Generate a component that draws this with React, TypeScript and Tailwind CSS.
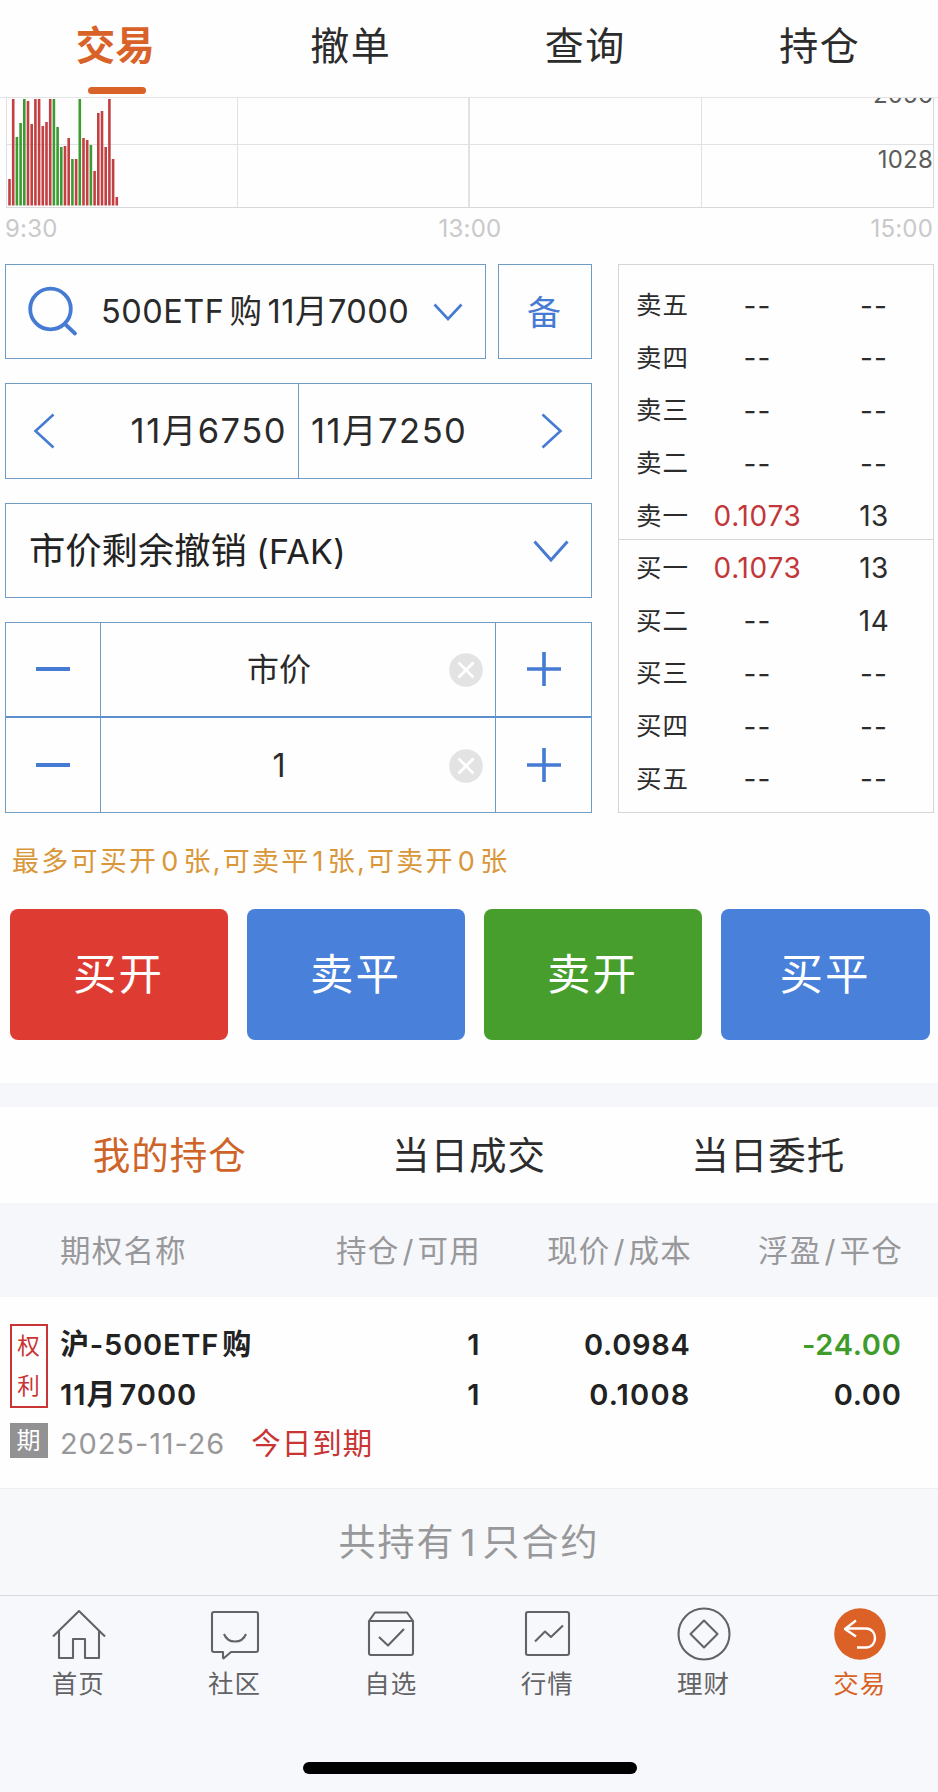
import React from "react";

const BAR_TOPS = [
  89, 9, 47, 33, 9, 11, 34, 9, 9, 36, 32, 9, 9, 37, 57, 56, 48, 69, 69, 9, 48, 50, 55, 81, 23, 21, 57, 9, 69, 107,
];
const BAR_COLORS = "rrgggrrrrrrrgggrrgrgrrgrrrrrrr";

function Tab({ label, active = false }: { label: string; active?: boolean }) {
  return (
    <div className="flex flex-1 flex-col items-center">
      <div
        className={
          active
            ? "mt-[16px] mr-[4px] h-[60px] text-[39.5px] leading-[60px] font-bold text-[#d96228]"
            : "mt-[16px] mr-[2px] h-[60px] text-[39px] leading-[60px] tracking-[1.5px] text-[#2c2c2c]"
        }
      >
        {label}
      </div>
      {active && <div className="mt-[11px] h-[7px] w-[58px] rounded-full bg-[#d96228]" />}
    </div>
  );
}

function VolumeChart() {
  return (
    <div className="relative h-[111px] overflow-hidden">
      <svg width="938" height="111" className="block" shapeRendering="crispEdges">
        <g stroke="#e2e2e4" strokeWidth="1">
          <path d="M6.5 0V109M237.5 0V109M701.5 0V109M6 46.5H933" />
          <path d="M469 0V109" strokeWidth="2" />
          <path d="M6 109.5H934M933.5 0V109" stroke="#d9d9dc" />
        </g>
        <g shapeRendering="auto">
          {BAR_TOPS.map((t, i) => (
            <rect
              key={i}
              x={8.2 + i * 3.7}
              y={t - 8}
              width={2.6}
              height={115.5 - t}
              fill={BAR_COLORS[i] === "g" ? "#3d9a30" : "#c23f42"}
            />
          ))}
        </g>
      </svg>
      <div className="absolute top-[-15px] right-[5px] text-[24px] leading-[24px] tracking-[0.2px] text-[#5c5c5c]">2056</div>
      <div className="absolute top-[50px] right-[5px] text-[24px] leading-[24px] tracking-[0.2px] text-[#5c5c5c]">1028</div>
    </div>
  );
}

function Chevron({ d, w, h, sw = 2.6 }: { d: string; w: number; h: number; sw?: number }) {
  return (
    <svg width={w} height={h} viewBox={`0 0 ${w} ${h}`} fill="none" stroke="#467bd3" strokeWidth={sw} className="block shrink-0">
      <path d={d} />
    </svg>
  );
}

function Stepper({ value, last = false }: { value: string; last?: boolean }) {
  return (
    <div className={last ? "flex h-[95px]" : "flex h-[95px] border-b-2 border-[#5d8fce]"}>
      <div className="flex w-[95px] items-center border-r border-[#6f9cc4] pl-[30px]">
        <div className="h-[4px] w-[34px] bg-[#467bd3]" />
      </div>
      <div className="flex w-[395px] items-center border-r border-[#6f9cc4]">
        <div className="ml-[40px] w-[276px] pt-[2px] text-center text-[32px] text-[#2a2a2a]">{value}</div>
        <svg width="34" height="34" viewBox="0 0 34 34" className="mt-[2px] ml-[32px] block">
          <circle cx="17" cy="17" r="16.8" fill="#e3e3e3" />
          <path d="M9.5 9.5L24.5 24.5M24.5 9.5L9.5 24.5" stroke="#fff" strokeWidth="2.8" />
        </svg>
      </div>
      <div className="flex flex-1 items-center justify-center">
        <svg width="34" height="34" viewBox="0 0 34 34" stroke="#467bd3" strokeWidth="3.6" className="block">
          <path d="M0 17H34M17 0V34" />
        </svg>
      </div>
    </div>
  );
}

function OrderForm() {
  return (
    <div className="flex w-[587px] flex-col">
      <div className="flex h-[95px] gap-[12px]">
        <div className="flex w-[481px] items-center border border-[#6f9cc4]">
          <svg width="52" height="52" viewBox="0 0 52 52" fill="none" stroke="#467bd3" strokeWidth="3.8" strokeLinecap="round" className="ml-[21px] block shrink-0">
            <circle cx="23.5" cy="23" r="20.3" />
            <path d="M38 38L48 47.5" />
          </svg>
          <div className="ml-[22px] w-[332px] pt-[1px] text-[32.5px] tracking-[0.5px] whitespace-nowrap text-[#2a2a2a]">
            500ETF<span className="mx-[5px]">购</span>11月7000
          </div>
          <Chevron d="M1.5 1.5L15 16L28.5 1.5" w={30} h={18} />
        </div>
        <div className="flex flex-1 items-center justify-center border border-[#6f9cc4] pt-[2px] pr-[2px] text-[34px] text-[#467bd3]">备</div>
      </div>
      <div className="mt-[24px] flex h-[96px] border border-[#6f9cc4]">
        <div className="flex w-[293px] items-center justify-between border-r border-[#6f9cc4] pr-[11px] pl-[27px]">
          <Chevron d="M20.5 1.5L2.5 18L20.5 34.5" w={22} h={36} />
          <div className="text-[34.5px] tracking-[1.5px] text-[#2a2a2a]">11月6750</div>
        </div>
        <div className="flex flex-1 items-center justify-between pr-[28px] pl-[12px]">
          <div className="text-[34.5px] tracking-[1.5px] text-[#2a2a2a]">11月7250</div>
          <Chevron d="M1.5 1.5L19.5 18L1.5 34.5" w={22} h={36} />
        </div>
      </div>
      <div className="mt-[24px] flex h-[95px] items-center justify-between border border-[#6f9cc4] pr-[22px] pl-[23px]">
        <div className="pt-[2px] text-[34px] text-[#222] whitespace-nowrap">
          <span className="text-[36.3px]">市价剩余撤销</span> <span className="text-[34px] tracking-[0.3px]">(FAK)</span>
        </div>
        <Chevron d="M1.5 1.5L18 20L34.5 1.5" w={36} h={22} sw={3} />
      </div>
      <div className="mt-[24px] flex h-[191px] flex-col border border-[#6f9cc4]">
        <Stepper value="市价" />
        <Stepper value="1" last />
      </div>
    </div>
  );
}

const BOOK = [
  ["卖五", "--", "--"],
  ["卖四", "--", "--"],
  ["卖三", "--", "--"],
  ["卖二", "--", "--"],
  ["卖一", "0.1073", "13"],
  ["买一", "0.1073", "13"],
  ["买二", "--", "14"],
  ["买三", "--", "--"],
  ["买四", "--", "--"],
  ["买五", "--", "--"],
];

function BookRow({ row }: { row: string[] }) {
  return (
    <div className="flex h-[52.6px] items-center text-[28px] leading-[40px] text-[#2c2c2c]">
      <div className="w-[70px] pl-[17px] text-[25.5px] tracking-[1px] whitespace-nowrap">{row[0]}</div>
      <div className={row[1] === "--" ? "w-[137px] pt-[1px] text-center tracking-[1px]" : "w-[137px] text-center tracking-[0.7px] text-[#c2383a]"}>{row[1]}</div>
      <div className={row[2] === "--" ? "w-[96px] pt-[1px] text-center tracking-[1px]" : "w-[96px] text-center tracking-[0.5px]"}>{row[2]}</div>
    </div>
  );
}

function OrderBook() {
  return (
    <div className="ml-[26px] h-[549px] w-[316px] border border-[#d6d6d8]">
      <div className="h-[275px] border-b border-[#d6d6d8] pt-[14px]">
        {BOOK.slice(0, 5).map((r) => (
          <BookRow key={r[0]} row={r} />
        ))}
      </div>
      <div className="pt-[2px]">
        {BOOK.slice(5).map((r) => (
          <BookRow key={r[0]} row={r} />
        ))}
      </div>
    </div>
  );
}

function NavItem({ label, active = false, children }: { label: string; active?: boolean; children: React.ReactNode }) {
  return (
    <div className="flex flex-1 flex-col items-center pt-[9px]">
      <svg width="56" height="56" viewBox="0 0 56 56" fill="none" stroke="#636366" strokeWidth="2.1" strokeLinejoin="round" className="ml-[1px] block">
        {children}
      </svg>
      <div
        className={
          active
            ? "mt-[3px] text-[25.5px] leading-[40px] tracking-[1px] text-[#d96228]"
            : "mt-[3px] text-[25.5px] leading-[40px] tracking-[1px] text-[#636366]"
        }
      >
        {label}
      </div>
    </div>
  );
}

export default function App() {
  return (
    <div className="flex h-[1792px] w-[938px] flex-col overflow-hidden bg-[#fefefe] font-['Inter','Noto_Sans_CJK_SC',sans-serif]">
      <div className="flex h-[98px] shrink-0 border-b border-[#e4e4e6]">
        <Tab label="交易" active />
        <Tab label="撤单" />
        <Tab label="查询" />
        <Tab label="持仓" />
      </div>
      <VolumeChart />
      <div className="flex h-[55px] justify-between pt-[8px] pr-[5px] pl-[5px] text-[24px] leading-[24px] tracking-[0.2px] text-[#c9c9cb]">
        <span>9:30</span>
        <span className="ml-[12px]">13:00</span>
        <span>15:00</span>
      </div>
      <div className="flex h-[549px] pl-[5px]">
        <OrderForm />
        <OrderBook />
      </div>
      <div className="mt-[29px] h-[40px] pl-[12px] text-[27px] leading-[40px] tracking-[2.25px] whitespace-nowrap text-[#d9973a]">
        最多可买开<span className="mx-[3px]">0</span>张,可卖平<span className="mx-[2px]">1</span>张,可卖开<span className="mx-[3px]">0</span>张
      </div>
      <div className="mt-[27px] flex h-[131px] gap-[19px] pl-[9.5px] text-[43.5px] tracking-[2px] text-white">
        <div className="flex w-[218px] items-center justify-center rounded-[8px] bg-[#de3c33] pt-[1px]">买开</div>
        <div className="flex w-[218px] items-center justify-center rounded-[8px] bg-[#4880da] pt-[1px]">卖平</div>
        <div className="flex w-[218px] items-center justify-center rounded-[8px] bg-[#479e2d] pt-[1px]">卖开</div>
        <div className="flex w-[209px] items-center justify-center rounded-[8px] bg-[#4880da] pt-[1px]">买平</div>
      </div>
      <div className="mt-[43px] h-[24px] shrink-0 bg-[#f6f7fa]" />
      <div className="flex h-[96px] shrink-0 items-center px-[20px] pt-[3px] text-[37.5px] tracking-[1px] text-[#2c2c2c]">
        <div className="flex-1 text-center text-[#cf6428]">我的持仓</div>
        <div className="flex-1 text-center">当日成交</div>
        <div className="flex-1 text-center">当日委托</div>
      </div>
      <div className="flex h-[94px] shrink-0 items-center bg-[#f6f7fa] pt-[1px] pl-[60px] text-[30.5px] tracking-[1.2px] text-[#98989b]">
        <div className="w-[160px] whitespace-nowrap">期权名称</div>
        <div className="w-[261px] text-right">持仓<span className="mx-[3px]">/</span>可用</div>
        <div className="w-[211px] text-right">现价<span className="mx-[3px]">/</span>成本</div>
        <div className="w-[211px] text-right">浮盈<span className="mx-[3px]">/</span>平仓</div>
      </div>
      <div className="flex h-[191px] shrink-0 pt-[23px] pl-[9.5px] text-[29px] leading-[50px] font-semibold text-[#222]">
        <div className="flex w-[38px] flex-col pt-[4px] font-normal">
          <div className="flex h-[84px] flex-col items-center justify-center border-2 border-[#c93434] text-[22.5px] leading-[40px] text-[#c93434]">
            <span>权</span>
            <span>利</span>
          </div>
          <div className="mt-[15px] h-[35px] bg-[#929295] text-center text-[24px] leading-[36px] text-white">期</div>
        </div>
        <div className="w-[421px] pl-[12.5px]">
          <div className="tracking-[0.8px]">沪-500ETF<span className="ml-[3px]">购</span></div>
          <div className="tracking-[1px]">11月<span className="ml-[3px]">7000</span></div>
          <div className="flex font-normal">
            <span className="leading-[47px] tracking-[0.9px] text-[#98989b]">2025-11-26</span>
            <span className="ml-[26px] text-[29.5px] leading-[47px] tracking-[1px] text-[#c93434]">今日到期</span>
          </div>
        </div>
        <div className="mr-[211px] -ml-[60px] w-[71px] text-right">
          <div>1</div>
          <div>1</div>
        </div>
        <div className="-ml-[140px] w-[140px] text-right tracking-[0.7px]">
          <div>0.0984</div>
          <div className="tracking-[1.2px]">0.1008</div>
        </div>
        <div className="w-[211px] text-right tracking-[0.7px]">
          <div className="text-[#3f9c2a]">-24.00</div>
          <div>0.00</div>
        </div>
      </div>
      <div className="flex h-[107px] shrink-0 items-center justify-center border-t border-[#eeeef0] bg-[#f7f8fa] pt-[2px] text-[37px] tracking-[2px] text-[#98989b]">
        共持有<span className="mx-[5px]">1</span>只合约
      </div>
      <div className="flex h-[197px] shrink-0 flex-col bg-[#f7f8fb]">
        <div className="flex h-[167px] border-t border-[#d8d9dc]">
          <NavItem label="首页">
            <path d="M2 31.5L28 6L54 31.5M8 26V53H22V34H34V53H48V26" />
          </NavItem>
          <NavItem label="社区">
            <path d="M7 7H49Q51 7 51 9V45Q51 47 49 47H24L17 53Q16 54 16 52V47H7Q5 47 5 45V9Q5 7 7 7Z" />
            <path d="M17 29C21 39 35 39 39 29" />
          </NavItem>
          <NavItem label="自选">
            <path d="M6 16L12 7.5H44L50 16V48Q50 50 48 50H8Q6 50 6 48ZM6 16H50M16 32L25 40.5L41 24" />
          </NavItem>
          <NavItem label="行情">
            <rect x="6" y="7" width="43" height="43" rx="2" />
            <path d="M15 36.5L25 26.5L31 32L43 20.5" />
          </NavItem>
          <NavItem label="理财">
            <circle cx="28" cy="29" r="25.5" />
            <path d="M28 15.5L41.5 29L28 42.5L14.5 29Z" />
          </NavItem>
          <NavItem label="交易" active>
            <circle cx="28" cy="29" r="25.8" fill="#dc6126" stroke="none" />
            <path d="M24 15.5L13 24L24 31.5M13 23.5H34C46 23.5 46 42.5 34 42.5H25" stroke="#fff" strokeWidth="2.4" />
          </NavItem>
        </div>
        <div className="ml-[303px] h-[12px] w-[334px] rounded-full bg-black" />
      </div>
    </div>
  );
}
